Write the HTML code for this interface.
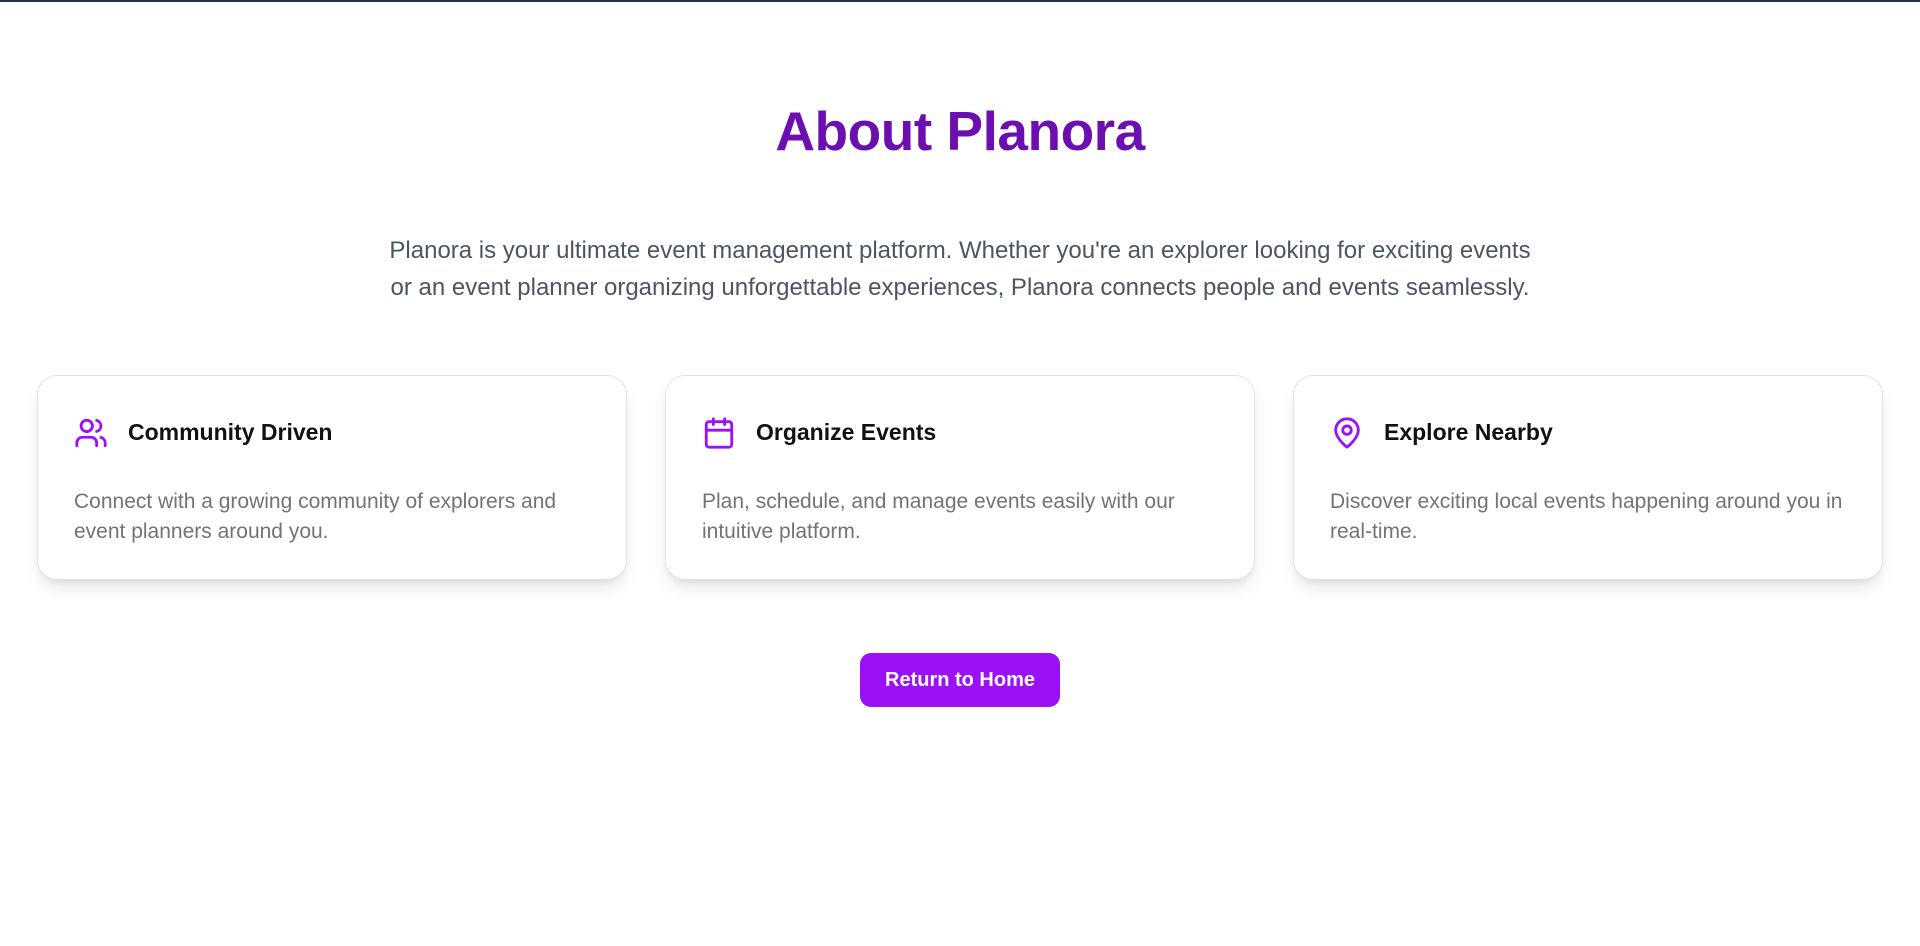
<!DOCTYPE html>
<html><head><meta charset="utf-8"><style>
*{box-sizing:border-box;margin:0;padding:0}
body{width:1920px;height:946px;background:#fff;font-family:"Liberation Sans",sans-serif;border-top:2px solid #1e2f4f;position:relative;overflow:hidden}
h1{position:absolute;top:97px;left:0;width:1920px;text-align:center;font-size:55px;font-weight:700;color:#6b0fb0;letter-spacing:-0.5px}
.intro{position:absolute;top:230px;left:0;width:1920px;text-align:center;font-size:24px;line-height:37px;color:#4b5563;white-space:nowrap}
.card{position:absolute;top:373px;width:590px;height:205px;border:1px solid #e3e3e6;border-radius:20px;background:#fff;box-shadow:0 10px 18px -4px rgba(0,0,0,.12),0 4px 8px -4px rgba(0,0,0,.08)}
.card svg{position:absolute;left:36px;top:40px}
.card .t{position:absolute;left:90px;top:43px;font-size:23px;font-weight:700;color:#111}
.card p{position:absolute;left:36px;top:111px;width:530px;font-size:21px;line-height:30px;color:#737373}
.btn{position:absolute;left:860px;top:651px;width:200px;height:54px;border-radius:11px;background:#9b10f7;color:#fff;font-size:20px;font-weight:700;text-align:center;line-height:54px}
</style></head><body>
<h1>About Planora</h1>
<div class="intro">Planora is your ultimate event management platform. Whether you're an explorer looking for exciting events<br>or an event planner organizing unforgettable experiences, Planora connects people and events seamlessly.</div>

<div class="card" style="left:37px">
<svg width="34" height="34" viewBox="0 0 24 24" fill="none" stroke="#9b10f7" stroke-width="2" stroke-linecap="round" stroke-linejoin="round"><path d="M16 21v-2a4 4 0 0 0-4-4H6a4 4 0 0 0-4 4v2"/><circle cx="9" cy="7" r="4"/><path d="M22 21v-2a4 4 0 0 0-3-3.87"/><path d="M16 3.13a4 4 0 0 1 0 7.75"/></svg>
<div class="t">Community Driven</div>
<p>Connect with a growing community of explorers and event planners around you.</p>
</div>
<div class="card" style="left:665px">
<svg width="34" height="34" viewBox="0 0 24 24" fill="none" stroke="#9b10f7" stroke-width="2" stroke-linecap="round" stroke-linejoin="round"><rect x="3" y="4" width="18" height="18" rx="2"/><path d="M16 2v4M8 2v4M3 10h18"/></svg>
<div class="t">Organize Events</div>
<p>Plan, schedule, and manage events easily with our intuitive platform.</p>
</div>
<div class="card" style="left:1293px">
<svg width="34" height="34" viewBox="0 0 24 24" fill="none" stroke="#9b10f7" stroke-width="2" stroke-linecap="round" stroke-linejoin="round"><path d="M20 10c0 6-8 12-8 12s-8-6-8-12a8 8 0 0 1 16 0Z"/><circle cx="12" cy="10" r="3"/></svg>
<div class="t">Explore Nearby</div>
<p>Discover exciting local events happening around you in real-time.</p>
</div>
<div class="btn">Return to Home</div>
</body></html>
